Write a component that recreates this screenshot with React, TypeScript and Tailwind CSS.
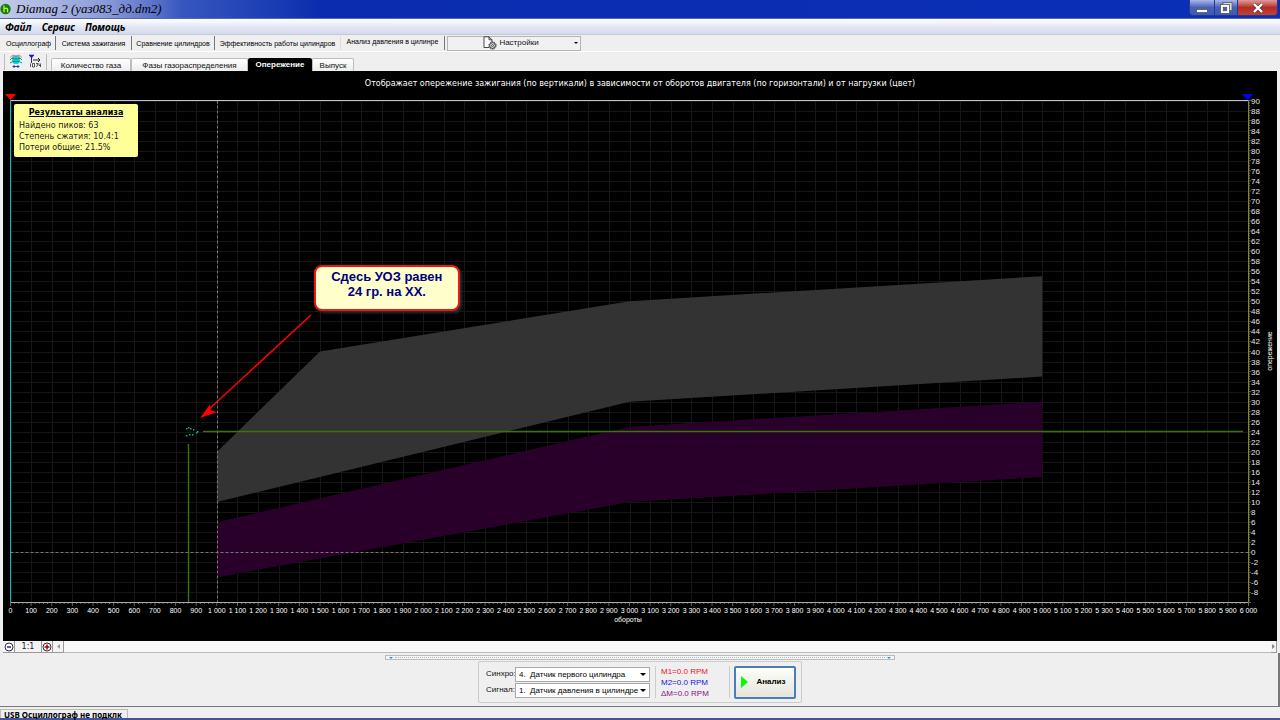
import type { ReactNode } from "react";

const PLOT = { left: 7.5, right: 1245.5, top: 29.5, bottom: 531.5 };

const sx = (rpm: number) => PLOT.left + (rpm / 6000) * (PLOT.right - PLOT.left);
const sy = (deg: number) => PLOT.top + ((90 - deg) / 100) * (PLOT.bottom - PLOT.top);
const snap = (v: number) => Math.round(v) + 0.5;
const toPoints = (list: number[][]) => list.map(([x, y]) => `${sx(x)},${sy(y)}`).join(" ");

const rpmTicks = Array.from({ length: 61 }, (_, i) => i * 100);
const rpmMinor = Array.from({ length: 301 }, (_, i) => i * 20);
const degTicks = Array.from({ length: 50 }, (_, i) => 90 - i * 2);
const degMinor = Array.from({ length: 201 }, (_, i) => 90 - i / 2);

const lightLoad = [[1000, 20], [1500, 40], [3000, 50], [5000, 55], [5000, 35], [3000, 30], [1000, 10]];
const fullLoad = [[1000, 6], [3000, 25], [5000, 30], [5000, 15], [3000, 10], [1000, -5]];

const samples = [
  [183, 357], [185, 356], [187, 357], [190, 358], [193, 361], [186, 363], [189, 363], [183, 364], [194, 360],
];

const formatRpm = (v: number) => String(v).replace(/(\d)(\d{3})$/, "$1 $2");

const mainTabs = [
  { label: "Осциллограф", width: "w-[53px]" },
  { label: "Система зажигания", width: "w-[75px]" },
  { label: "Сравнение цилиндров", width: "w-[82px]" },
  { label: "Эффективность работы цилиндров", width: "w-[125px]", plain: true },
  { label: "Анализ давления в цилинре", width: "w-[103px]", active: true },
];

const subTabs = [
  { label: "Количество газа", width: "w-20" },
  { label: "Фазы газораспределения", width: "w-[117px]" },
  { label: "Опережение", width: "w-16", active: true },
  { label: "Выпуск", width: "w-[42px]" },
];

function TitleBar() {
  return (
    <header className="flex h-[19px] items-start justify-between border-b border-[#5666b4] bg-linear-to-r from-[#7284d0] via-[#0b2cae] via-25% to-[#0a2fb8]">
      <div className="flex h-[18px] items-center gap-1 bg-linear-to-r from-[#c3cbea] via-[#94a2dc] to-transparent pr-5">
        <svg viewBox="0 0 12 12" className="size-3">
          <circle cx="5.5" cy="6" r="5.2" fill="#12810f" />
          <path d="M4 2.5v6.8M4 6.4c.6-1.6 3.6-1.8 3.6.2v2.6" fill="none" stroke="#d8f53a" strokeWidth="1.2" />
        </svg>
        <h1 className="font-['Liberation_Serif',serif] text-[13px] leading-[18px] whitespace-nowrap text-black italic">
          Diamag 2 (уаз083_дд.dm2)
        </h1>
      </div>
      <div className="mr-0.5 flex h-4 overflow-hidden rounded-b border border-t-0 border-[#26388a]">
        <button aria-label="Свернуть" className="flex w-6 items-end justify-center bg-linear-to-b from-[#a9b7ea] via-[#4960b8] to-[#3b59bd] pb-0.5">
          <svg viewBox="0 0 12 4" className="h-1 w-3">
            <rect x=".5" y=".5" width="11" height="3" fill="#fff" stroke="#555" strokeWidth=".8" />
          </svg>
        </button>
        <button aria-label="Развернуть" className="flex w-[23px] items-center justify-center border-l border-[#26388a] bg-linear-to-b from-[#a9b7ea] via-[#4960b8] to-[#3b59bd]">
          <svg viewBox="0 0 14 14" className="size-3.5">
            <rect x="4" y="1.5" width="9" height="8" fill="#ddd" stroke="#555" strokeWidth=".8" />
            <rect x="1.5" y="3.5" width="9" height="9" fill="#fff" stroke="#555" strokeWidth=".8" />
            <rect x="4.3" y="6.3" width="3.4" height="3.4" fill="#4960b8" stroke="#555" strokeWidth=".8" />
          </svg>
        </button>
        <button aria-label="Закрыть" className="flex w-10 items-center justify-center border-l border-[#26388a] bg-linear-to-b from-[#dc9a9a] via-[#b52a24] to-[#c04238]">
          <svg viewBox="0 0 12 12" className="size-3">
            <path d="M2 2l8 8M10 2l-8 8" stroke="#444" strokeWidth="3.6" />
            <path d="M2 2l8 8M10 2l-8 8" stroke="#fff" strokeWidth="2.4" />
          </svg>
        </button>
      </div>
    </header>
  );
}

function MenuBar() {
  return (
    <nav className="flex h-4 items-center gap-[10px] border-b border-[#c5cad8] bg-linear-to-b from-white via-[#e4e8f4] to-[#d3daee] px-[5px] font-['Noto_Sans',sans-serif] text-[10px] leading-4 font-bold text-black italic">
      {["Файл", "Сервис", "Помощь"].map((item) => (
        <button key={item}>{item}</button>
      ))}
    </nav>
  );
}

function MainTabs() {
  return (
    <div className="flex h-4 items-center pl-0.5">
      {mainTabs.map((tab) => (
        <button
          key={tab.label}
          className={`${tab.width} ${tab.active ? "pb-0.5" : "pt-0.5"} ${tab.plain ? "border-[#ddd]" : "border-[#777]"} box-content h-3 border-r text-center text-[7px] leading-3 whitespace-nowrap text-black`}
        >
          {tab.label}
        </button>
      ))}
      <button className="ml-0.5 flex h-[15px] w-[134px] items-center border border-[#b4b4b4] bg-[#f1f1f1]">
        <span className="flex flex-1 items-center justify-center gap-0.5">
          <svg viewBox="0 0 14 14" className="size-3.5" fill="none" stroke="#333">
            <path d="M6 11.5H1V.8h5l3 3V6M6 .8v3h3" strokeWidth=".9" fill="#fff" />
            <circle cx="9.5" cy="9.5" r="2.9" strokeWidth="1" fill="#dde4dd" />
            <circle cx="9.5" cy="9.5" r="3.7" strokeWidth="1" strokeDasharray="1.2 1.1" />
            <circle cx="9.5" cy="9.5" r="1" strokeWidth=".8" />
          </svg>
          Настройки
        </span>
        <svg viewBox="0 0 4 2" className="mr-0.5 h-0.5 w-1">
          <path d="M0 0h4L2 2z" />
        </svg>
      </button>
    </div>
  );
}

function SubTabs() {
  return (
    <div className="flex h-5 border-t border-white pl-1">
      <div className="mt-0.5 mr-1 flex h-4 w-[43px] items-start gap-1.5 border-x border-[#bbb] pl-1">
        <button aria-label="Сигнал">
          <svg viewBox="0 0 14 14" className="size-3.5" fill="none">
            <path d="M3 3c2-2 6-2 8 0v5l-2 2H5L3 8z" fill="#18d0d6" />
            <path d="M1 6l2-2 3 1h2l3-1 2 2M1 9l2.500-1.500M13 9l-2.500-1.500M4 7.500h6" stroke="#168b77" />
            <path d="M1.500 3.500C3 .5 5 1 7 2.500 9 1 11 .5 12.500 3.500" stroke="#e86060" />
            <path d="M4 12.500h6M5.500 11L4 12.500l1.500 1.500M8.500 11l1.500 1.500L8.500 14" stroke="#2937d8" />
          </svg>
        </button>
        <button aria-label="Значения">
          <svg viewBox="0 0 12 14" className="h-3.5 w-3" fill="none">
            <path d="M0 1h5L2.5 4z" fill="#1414e8" stroke="#1414e8" strokeWidth=".6" />
            <path d="M2.5 3v6" stroke="#2020c0" />
            <path d="M4 6h7M9 4l2 2-2 2" stroke="#222" />
            <path d="M1.500 9.500v3.500M3.500 9.500h2v3.500h-2zM7 9.500h2L7.500 13M10 9.500v2h1.500M11.500 9.500v3.500" stroke="#333" strokeWidth=".8" />
          </svg>
        </button>
      </div>
      <div className="mt-1.5 flex h-3.5">
        {subTabs.map((tab) => (
          <button
            key={tab.label}
            className={`${tab.width} ${
              tab.active ? "bg-black font-bold text-white" : "border border-b-0 border-[#bdbdbd] bg-linear-to-b from-white to-[#ececec]"
            } rounded-t-xs text-center leading-3 whitespace-nowrap`}
          >
            {tab.label}
          </button>
        ))}
      </div>
    </div>
  );
}

function Plot() {
  return (
    <svg viewBox="0 0 1274 570" className="block h-auto w-full">
      <rect width="1274" height="570" fill="#000" />
      <text x="637" y="15" fontSize="8" fill="#fff" textAnchor="middle" className="font-['DejaVu_Sans',sans-serif]">
        Отображает опережение зажигания (по вертикали) в зависимости от оборотов двигателя (по горизонтали) и от нагрузки (цвет)
      </text>

      {/* grid */}
      <g stroke="#161616">
        {rpmTicks.map((v) => (
          <line key={v} x1={snap(sx(v))} x2={snap(sx(v))} y1={PLOT.top} y2={PLOT.bottom} />
        ))}
        {degTicks.map((v) => (
          <line key={v} x1={PLOT.left} x2={PLOT.right} y1={snap(sy(v))} y2={snap(sy(v))} />
        ))}
      </g>

      {/* load zones */}
      <polygon points={toPoints(lightLoad)} fill="#333333" />
      <polygon points={toPoints(fullLoad)} fill="#290029" />

      {/* zero lines and frame */}
      <g stroke="#777" strokeDasharray="3 2">
        <line x1={snap(sx(1000))} x2={snap(sx(1000))} y1={PLOT.top} y2={PLOT.bottom} />
        <line x1={PLOT.left} x2={PLOT.right} y1={snap(sy(0))} y2={snap(sy(0))} />
      </g>
      <line x1={PLOT.left} x2={PLOT.right} y1={PLOT.top} y2={PLOT.top} stroke="#c4c4c4" />
      <line x1={PLOT.left} x2={PLOT.right} y1={PLOT.bottom} y2={PLOT.bottom} stroke="#aaa" />
      <line x1={PLOT.left} x2={PLOT.left} y1={PLOT.top} y2={PLOT.bottom} stroke="#19b6bd" />
      <line x1={PLOT.right} x2={PLOT.right} y1={PLOT.top} y2={PLOT.bottom} stroke="#8b8524" />

      {/* ticks */}
      <g stroke="#888" strokeWidth=".7">
        {rpmMinor.map((v) => (
          <line key={v} x1={sx(v)} x2={sx(v)} y1="532" y2={v % 100 ? 533 : 535} />
        ))}
        {degMinor.map((v) => (
          <line key={v} x1="1246" x2={v % 2 ? 1247 : 1248} y1={sy(v)} y2={sy(v)} />
        ))}
      </g>
      <g fontSize="7" fill="#fff" textAnchor="middle">
        {rpmTicks.map((v) => (
          <text key={v} x={sx(v)} y="542">{formatRpm(v)}</text>
        ))}
        <text x="625" y="551">обороты</text>
        <text transform="translate(1269 280) rotate(-90)">опережение</text>
      </g>
      <g fontSize="8" fill="#e6e6e6">
        {degTicks.map((v) => (
          <text key={v} x="1248" y={sy(v) + 3}>{v}</text>
        ))}
      </g>

      {/* markers */}
      <path d="M2 23h11l-5.5 6z" fill="#f00" />
      <path d="M1239 23h11l-5.5 6z" fill="#00f" />

      {/* measured point */}
      <g stroke="#3b7509" strokeWidth="1.4">
        <line x1="200" x2="1240" y1="360.5" y2="360.5" />
        <line x1="185.5" x2="185.5" y1="373" y2="531" />
      </g>
      {samples.map(([x, y]) => (
        <rect key={`${x}-${y}`} x={x} y={y} width="1.5" height="1.5" fill="#12a888" />
      ))}
      <path d="M308 244L204 340" stroke="#f00" strokeWidth="1.5" />
      <path d="M197 347l10-13.5 1 6 6 1.5z" fill="#f00" />
    </svg>
  );
}

function Chart() {
  return (
    <main className="relative mx-[3px] bg-black">
      <Plot />
      <section className="absolute top-[33px] left-[11px] w-[124px] rounded-xs bg-[#ffff99] px-[5px] pt-[3px] pb-1 font-['DejaVu_Sans',sans-serif] text-[8px] leading-[11px] text-[#222]">
        <h2 className="mb-0.5 text-center font-bold text-black underline">Результаты анализа</h2>
        <p>Найдено пиков: 63</p>
        <p>Степень сжатия: 10.4:1</p>
        <p>Потери общие: 21.5%</p>
      </section>
      <p className="absolute top-[34%] left-[24.4%] h-[46px] w-[146px] rounded-lg border-2 border-[#f01414] bg-[#ffffcc] pt-0.5 text-center text-[13px] leading-[15px] font-bold text-[#000080] shadow-[2px_2px_3px_#233]">
        Сдесь УОЗ равен
        <br />
        24 гр. на ХХ.
      </p>
    </main>
  );
}

function ZoomButton({ label, className, children }: { label: string; className: string; children: ReactNode }) {
  return (
    <button aria-label={label} className={`${className} flex h-3 items-center justify-center border-r border-b border-[#999] bg-[#f3f3f3]`}>
      {children}
    </button>
  );
}

function ZoomBar() {
  return (
    <div className="mx-[3px] flex h-3 border-b border-[#bbb] bg-[#f8f8f8]">
      <ZoomButton label="Уменьшить" className="w-3">
        <svg viewBox="0 0 10 10" className="size-[10px]" fill="none">
          <circle cx="5" cy="5" r="4" fill="#fff" stroke="#333" />
          <path d="M3 5h4" stroke="#00a" strokeWidth="1.3" />
        </svg>
      </ZoomButton>
      <ZoomButton label="Масштаб 1:1" className="w-[27px]">
        <span className="font-['DejaVu_Sans',sans-serif] leading-[11px] text-[#223]">1:1</span>
      </ZoomButton>
      <ZoomButton label="Увеличить" className="w-[11px]">
        <svg viewBox="0 0 10 10" className="size-[10px]" fill="none">
          <circle cx="5" cy="5" r="4" fill="#fff" stroke="#333" />
          <path d="M2.5 5h5M5 2.5v5" stroke="#a00" strokeWidth="1.5" />
        </svg>
      </ZoomButton>
      <ZoomButton label="Влево" className="w-[11px]">
        <svg viewBox="0 0 3 5" className="h-[5px] w-[3px]">
          <path d="M3 0v5L0 2.5z" fill="#999" />
        </svg>
      </ZoomButton>
      <div className="flex-1" />
      <ZoomButton label="Вправо" className="w-1.5">
        <svg viewBox="0 0 3 5" className="h-[5px] w-[3px]">
          <path d="M0 0v5L3 2.5z" fill="#888" />
        </svg>
      </ZoomButton>
    </div>
  );
}

function ChannelSelect({ id, label, value }: { id: string; label: string; value: string }) {
  return (
    <div className="flex items-center">
      <label htmlFor={id} className="w-[29px] whitespace-nowrap">{label}</label>
      <div className="relative">
        <select id={id} className="block h-[15px] w-[135px] appearance-none border border-[#aaa] bg-white pl-[3px] leading-[13px] text-black">
          <option>{value}</option>
        </select>
        <svg viewBox="0 0 6 3" className="pointer-events-none absolute top-1.5 right-1 h-[3px] w-1.5">
          <path d="M0 0h6L3 3z" />
        </svg>
      </div>
    </div>
  );
}

function Controls() {
  return (
    <section className="flex flex-1 flex-col items-center border-r-2 border-b border-[#777] pt-0.5 pl-0.5">
      <div className="flex h-[5px] w-[510px] items-center justify-between border border-[#bbb] bg-[#f5f5f5] px-[3px]">
        <svg viewBox="0 0 4 2" className="h-0.5 w-1"><path d="M0 0h4L2 2z" fill="#2a8be0" /></svg>
        <div className="mx-0.5 flex-1 border-t border-dotted border-[#a9bccd]" />
        <svg viewBox="0 0 4 2" className="h-0.5 w-1"><path d="M0 0h4L2 2z" fill="#2a8be0" /></svg>
      </div>
      <div className="mt-px flex h-[42px] items-center rounded-xs border border-[#ccc] pr-[5px] pl-[7px]">
        <div className="flex flex-col gap-px">
          <ChannelSelect id="sync" label="Синхро:" value={"4.\u00a0\u00a0Датчик первого цилиндра"} />
          <ChannelSelect id="signal" label="Сигнал:" value={"1.\u00a0\u00a0Датчик давления в цилиндре"} />
        </div>
        <div className="ml-[5px] h-8 w-[75px] border-x border-[#ccc] pl-[5px] leading-[11px] whitespace-nowrap">
          <p className="text-[#e8141c]">M1=0.0 RPM</p>
          <p className="text-[#1414e8]">M2=0.0 RPM</p>
          <p className="text-[#801480]">ΔM=0.0 RPM</p>
        </div>
        <button className="ml-1 flex h-[33px] w-[62px] items-center rounded-xs border-2 border-[#4a7fb5] bg-linear-to-b from-[#fdfdfb] to-[#e6e5da] pl-[5px] font-bold text-black">
          <svg viewBox="0 0 7 12" className="h-3 w-[7px]">
            <path d="M0 0v12l7-6z" fill="#0f0" />
          </svg>
          <span className="flex-1 text-center">Анализ</span>
        </button>
      </div>
    </section>
  );
}

export default function App() {
  return (
    <div className="flex min-h-screen flex-col bg-[#efefef] font-['Liberation_Sans',sans-serif] text-[8px] text-[#111]">
      <TitleBar />
      <MenuBar />
      <MainTabs />
      <div className="flex flex-1 flex-col">
        <SubTabs />
        <Chart />
        <ZoomBar />
        <Controls />
      </div>
      <footer className="flex h-[13px] border-b-2 border-[#4353a0] pt-0.5">
        <p className="h-[9px] w-32 border border-b-0 border-[#bbb] pl-[3px] font-['Noto_Sans',sans-serif] leading-[9px] font-bold whitespace-nowrap text-black">
          USB Осциллограф не подклк
        </p>
      </footer>
    </div>
  );
}
